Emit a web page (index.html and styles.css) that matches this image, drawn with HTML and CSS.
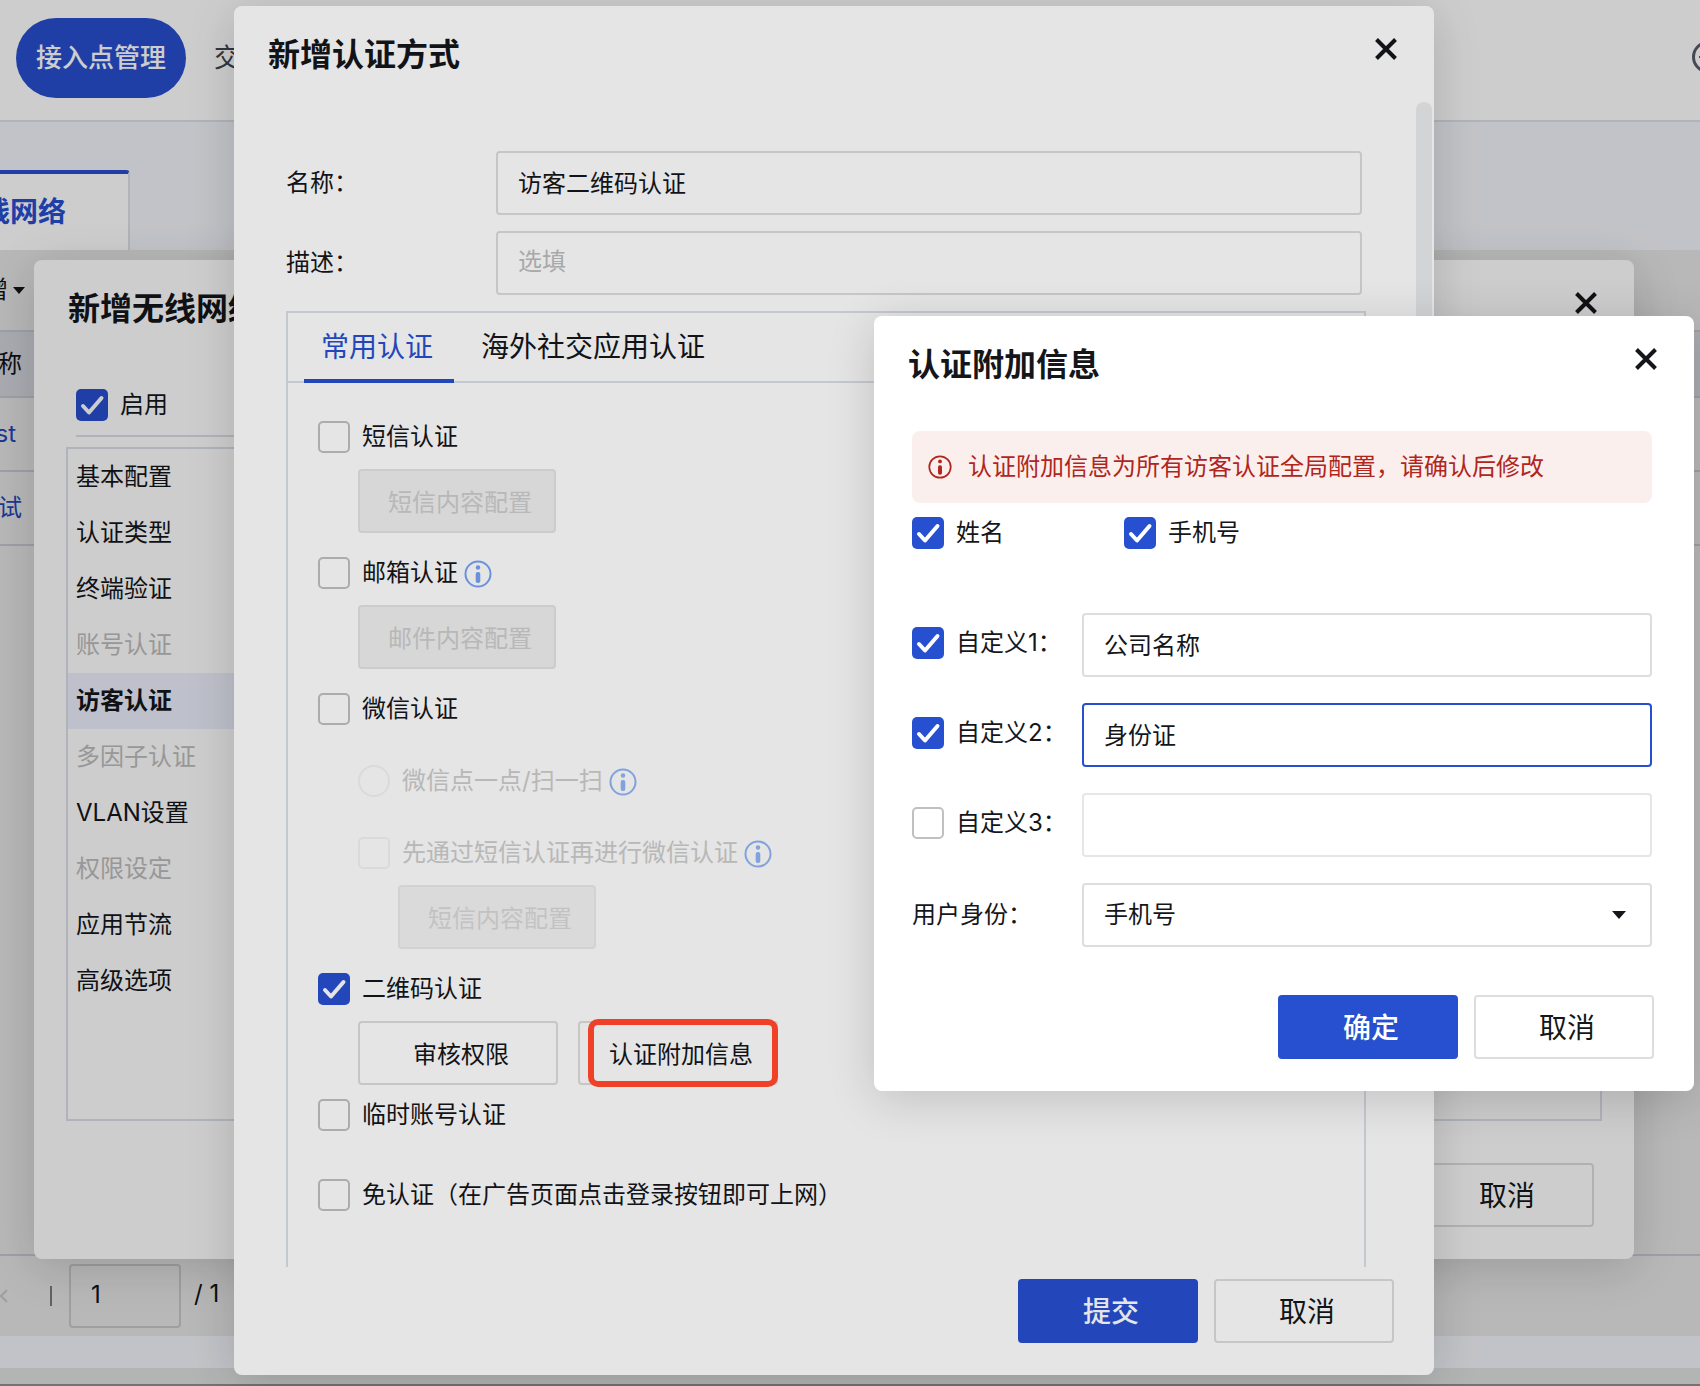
FILE: index.html
```html
<!DOCTYPE html>
<html lang="zh-CN">
<head>
<meta charset="utf-8">
<title>接入点管理 - 无线网络</title>
<link rel="stylesheet" href="styles.css">
</head>
<body>
<svg class="symbols" aria-hidden="true">
  <symbol id="close" viewBox="0 0 32 32"><path d="M6.500 6.500 25.500 25.500M25.500 6.500 6.500 25.500" fill="none" stroke="currentColor" stroke-width="4"/></symbol>
  <symbol id="info" viewBox="0 0 28 28"><circle cx="14" cy="14" r="12.500" fill="none" stroke="currentColor" stroke-width="2"/><circle cx="14" cy="7.500" r="2.200" fill="currentColor"/><rect x="11.700" y="12" width="4.600" height="11" rx="2" fill="currentColor"/></symbol>
  <symbol id="caret" viewBox="0 0 14 8"><path d="M0 0h14L7 8z" fill="currentColor"/></symbol>
</svg>

<div class="page">
  <header class="topbar">
    <a class="nav-item nav-active" href="#ap">接入点管理</a>
    <a class="nav-item" href="#switch">交换机管理</a>
    <button class="topbar-add" type="button" aria-label="添加">
      <svg viewBox="0 0 32 32" width="32" height="32"><circle cx="16" cy="16" r="14.500" fill="none" stroke="currentColor" stroke-width="3"/><path d="M7 16h18M16 7v18" stroke="currentColor" stroke-width="2"/></svg>
    </button>
  </header>
  <div class="tabstrip"><a class="page-tab" href="#wlan">无线网络</a></div>

  <main class="content">
    <div class="toolbar"><button class="add-menu" type="button">新增<svg width="12" height="7"><use href="#caret"/></svg></button></div>
    <table class="list">
      <thead><tr><th>名称</th></tr></thead>
      <tbody>
        <tr><td><a href="#test">test</a></td></tr>
        <tr><td><a href="#ceshi">测试</a></td></tr>
      </tbody>
    </table>
    <div class="pager">
      <button class="pager-prev" type="button" disabled aria-label="上一页"><svg width="8" height="14" viewBox="0 0 8 14"><path d="M7 1 1 7l6 6" fill="none" stroke="currentColor" stroke-width="2"/></svg></button>
      <span class="pager-sep"></span>
      <input class="field pager-input" type="text" value="1" aria-label="页码">
      <span class="pager-total">/ 1</span>
    </div>
    <div class="mask"></div>

    <section class="modal modal-wlan" role="dialog" aria-label="新增无线网络">
      <div class="modal-head">
        <h2>新增无线网络</h2>
        <button class="close" type="button" aria-label="关闭"><svg width="32" height="32"><use href="#close"/></svg></button>
      </div>
      <div class="wlan-body">
        <div class="wlan-enable"><label class="check"><input type="checkbox" checked>启用</label></div>
        <div class="wlan-panel">
          <nav class="side">
            <a href="#base">基本配置</a>
            <a href="#type">认证类型</a>
            <a href="#terminal">终端验证</a>
            <a class="off" href="#account">账号认证</a>
            <a class="current" href="#guest">访客认证</a>
            <a class="off" href="#mfa">多因子认证</a>
            <a href="#vlan">VLAN设置</a>
            <a class="off" href="#rights">权限设定</a>
            <a href="#throttle">应用节流</a>
            <a href="#advanced">高级选项</a>
          </nav>
        </div>
      </div>
      <div class="modal-foot wlan-foot"><button class="btn btn-large" type="button">取消</button></div>
    </section>
  </main>
  <div class="stage-gap"></div>
  <div class="window-edge"></div>

  <div class="mask"></div>

  <section class="modal modal-auth" role="dialog" aria-label="新增认证方式">
    <div class="modal-head">
      <h2>新增认证方式</h2>
      <button class="close" type="button" aria-label="关闭"><svg width="32" height="32"><use href="#close"/></svg></button>
    </div>
    <div class="auth-body">
      <span class="scroll-thumb"></span>
      <div class="form-row"><label for="auth-name">名称：</label><input class="field" id="auth-name" type="text" value="访客二维码认证"></div>
      <div class="form-row"><label for="auth-desc">描述：</label><input class="field" id="auth-desc" type="text" placeholder="选填"></div>
      <div class="auth-panel">
        <div class="tabs" role="tablist">
          <button class="tab tab-on" type="button" role="tab">常用认证</button>
          <button class="tab" type="button" role="tab">海外社交应用认证</button>
        </div>
        <div class="options">
          <div class="option">
            <label class="check"><input type="checkbox">短信认证</label>
            <div class="option-actions"><button class="btn" type="button" disabled>短信内容配置</button></div>
          </div>
          <div class="option">
            <div class="line"><label class="check"><input type="checkbox">邮箱认证</label><svg class="info" width="28" height="28"><use href="#info"/></svg></div>
            <div class="option-actions"><button class="btn" type="button" disabled>邮件内容配置</button></div>
          </div>
          <div class="option option-wechat">
            <label class="check"><input type="checkbox">微信认证</label>
            <div class="line sub"><label class="check"><input type="radio" disabled>微信点一点/扫一扫</label><svg class="info info-off" width="28" height="28"><use href="#info"/></svg></div>
            <div class="option sub">
              <div class="line"><label class="check"><input type="checkbox" disabled>先通过短信认证再进行微信认证</label><svg class="info info-off" width="28" height="28"><use href="#info"/></svg></div>
              <div class="option-actions"><button class="btn btn-faint" type="button" disabled>短信内容配置</button></div>
            </div>
          </div>
          <div class="option option-qr">
            <label class="check"><input type="checkbox" checked>二维码认证</label>
            <div class="option-actions">
              <button class="btn btn-wide" type="button">审核权限</button>
              <span class="marked"><button class="btn btn-wide" type="button">认证附加信息</button></span>
            </div>
          </div>
          <div class="option option-last">
            <label class="check"><input type="checkbox">临时账号认证</label>
            <label class="check"><input type="checkbox">免认证（在广告页面点击登录按钮即可上网）</label>
          </div>
        </div>
      </div>
    </div>
    <div class="modal-foot auth-foot">
      <button class="btn btn-large btn-primary" type="button">提交</button>
      <button class="btn btn-large" type="button">取消</button>
    </div>
  </section>

  <div class="mask"></div>

  <section class="modal modal-extra" role="dialog" aria-label="认证附加信息">
    <div class="modal-head">
      <h2>认证附加信息</h2>
      <button class="close" type="button" aria-label="关闭"><svg width="32" height="32"><use href="#close"/></svg></button>
    </div>
    <div class="extra-body">
      <p class="alert"><svg width="24" height="24"><use href="#info"/></svg>认证附加信息为所有访客认证全局配置，请确认后修改</p>
      <div class="pair">
        <label class="check"><input type="checkbox" checked>姓名</label>
        <label class="check"><input type="checkbox" checked>手机号</label>
      </div>
      <div class="extra-rows">
        <div class="extra-row"><label class="check"><input type="checkbox" checked>自定义1：</label><input class="field" type="text" value="公司名称" aria-label="自定义1"></div>
        <div class="extra-row"><label class="check"><input type="checkbox" checked>自定义2：</label><input class="field field-active" type="text" value="身份证" aria-label="自定义2"></div>
        <div class="extra-row"><label class="check"><input type="checkbox">自定义3：</label><input class="field" type="text" disabled aria-label="自定义3"></div>
        <div class="extra-row"><label for="identity">用户身份：</label><span class="select"><select class="field" id="identity"><option>手机号</option></select><svg width="14" height="8"><use href="#caret"/></svg></span></div>
      </div>
    </div>
    <div class="modal-foot">
      <button class="btn btn-large btn-primary" type="button">确定</button>
      <button class="btn btn-large" type="button">取消</button>
    </div>
  </section>
</div>
</body>
</html>
```
FILE: styles.css
```css
:root {
  --blue: #2750d0;
  --text: #14161a;
  --line: #dbdfe8;
  --field: #dddddd;
}

* { box-sizing: border-box; }

body {
  margin: 0;
  overflow: hidden;
  font: 24px/32px Inter, "Noto Sans CJK SC", sans-serif;
  color: var(--text);
  background: #fff;
}

button, input, select { font: inherit; color: inherit; }
button { border: 0; padding: 0; background: none; }
a { color: inherit; text-decoration: none; }
svg { display: block; flex: none; }
.symbols { position: absolute; width: 0; height: 0; }

.page {
  position: relative;
  display: flex;
  flex-direction: column;
  height: 100vh;
  overflow: hidden;
}

/* Page behind the dialogs */
.topbar {
  display: flex;
  align-items: center;
  flex: none;
  gap: 8px;
  height: 122px;
  padding: 0 0 4px 16px;
  border-bottom: 2px solid var(--line);
}
.nav-item {
  padding: 24px 20px;
  font-size: 26px;
  color: #3f434d;
}
.nav-active {
  border-radius: 40px;
  font-weight: 500;
  color: #fff;
  background: var(--blue);
}
.topbar-add { margin: 0 -24px 0 auto; padding-bottom: 2px; color: #565c6b; }

.tabstrip {
  display: flex;
  align-items: flex-end;
  flex: none;
  height: 128px;
  background: #f2f3f9;
}
.page-tab {
  height: 80px;
  margin-left: -110px;
  padding: 22px 62px 0 64px;
  border-top: 4px solid var(--blue);
  border-right: 2px solid var(--line);
  border-radius: 0 4px 0 0;
  font-size: 28px;
  font-weight: 700;
  color: var(--blue);
  background: #fff;
}

.content {
  position: relative;
  display: flex;
  flex-direction: column;
  flex: 1;
  background: #fff;
}
.toolbar { display: flex; align-items: center; height: 80px; margin-left: -40px; }
.add-menu { display: flex; align-items: center; gap: 5px; }
.list { width: 100%; border-collapse: separate; border-spacing: 0; border-top: 2px solid var(--line); }
.list th, .list td {
  padding: 0;
  border-bottom: 2px solid var(--line);
  text-align: left;
  font-weight: 400;
  text-indent: -26px;
}
.list th { height: 66px; background: #eceff7; }
.list td { height: 74px; color: var(--blue); }
.pager {
  display: flex;
  align-items: center;
  gap: 13px;
  height: 82px;
  margin-top: auto;
  border-top: 2px solid var(--line);
}
.pager-prev { color: #dcdcdc; }
.pager-sep { width: 2px; height: 20px; margin: 0 4px 0 29px; background: #8a8a8a; }
.pager-input { width: 112px; padding-left: 24px; }
.pager-total { padding-bottom: 4px; }
.stage-gap { flex: none; height: 32px; background: #f2f3f9; }
.window-edge { flex: none; height: 18px; border-bottom: 2px solid #909090; background: #dfe0e0; }

.mask { position: absolute; inset: 0; background: rgba(0, 0, 0, .1); }

/* Dialog frame */
.modal {
  position: absolute;
  display: flex;
  flex-direction: column;
  border-radius: 8px;
  background: #fff;
  box-shadow: 0 8px 48px rgba(0, 0, 0, .16);
}
.modal-head {
  display: flex;
  justify-content: space-between;
  flex: none;
  height: 96px;
  padding: 27px 32px 0 34px;
}
.modal-head h2 { margin: 2px 0 0; font-size: 32px; line-height: 40px; font-weight: 700; }
.close { align-self: flex-start; }
.modal-foot { display: flex; justify-content: flex-end; flex: none; gap: 16px; padding: 48px 40px 32px; }

/* Controls */
.field {
  height: 64px;
  min-width: 0;
  padding: 0 20px 3px;
  border: 2px solid var(--field);
  border-radius: 4px;
  outline: 0;
  background: #fff;
}
.field::placeholder { color: #bbbbbb; opacity: 1; }
.field:disabled { border-color: #e6e6e6; }
.field-active { border-color: var(--blue); }

.btn {
  height: 64px;
  padding: 3px 24px 0 28px;
  border: 2px solid var(--field);
  border-radius: 4px;
  background: #fff;
}
.btn:disabled { padding-right: 22px; border-color: #e4e4e4; color: #cdcdcd; background: #f0f0f0; }
.btn-faint { opacity: .75; }
.btn-wide { width: 200px; padding: 3px 0 0 6px; }
.btn-large { width: 180px; padding: 2px 0 0 6px; font-size: 28px; }
.btn-primary { border-color: var(--blue); font-weight: 500; color: #fff; background: var(--blue); }

.check { display: flex; align-items: center; gap: 12px; }
.check input {
  appearance: none;
  flex: none;
  width: 32px;
  height: 32px;
  margin: 0;
  border: 2px solid #c0c0c0;
  border-radius: 5px;
}
.check input[type="radio"] { border-radius: 50%; }
.check input:checked {
  border: 0;
  background: var(--blue) url("data:image/svg+xml,%3Csvg xmlns='http://www.w3.org/2000/svg' viewBox='0 0 32 32'%3E%3Cpath d='M7 17l6 6.500L25.500 9' fill='none' stroke='white' stroke-width='4' stroke-linecap='round' stroke-linejoin='round'/%3E%3C/svg%3E");
}
.check:has(:disabled) { color: #cdcdcd; }
.check input:disabled { border-color: #f3f3f3; }

/* Wireless network dialog */
.modal-wlan { top: 10px; left: 34px; right: 66px; }
.wlan-body { display: flex; flex-direction: column; gap: 10px; padding: 33px 32px 0; }
.wlan-enable { margin: 0 10px; padding-bottom: 14px; border-bottom: 2px solid var(--line); }
.wlan-panel { min-height: 674px; border: 2px solid var(--line); }
.side { display: flex; flex-direction: column; width: 220px; }
.side a { padding: 12px 8px; }
.side .off { color: #bdbdbd; }
.side .current { font-weight: 700; background: #ecf0fc; }
.wlan-foot { padding-top: 42px; }

/* Authentication dialog */
.modal-auth { top: 6px; bottom: 11px; left: 234px; width: 1200px; }
.auth-body {
  position: relative;
  display: flex;
  flex-direction: column;
  flex: 1;
  gap: 16px;
  min-height: 0;
  padding: 49px 68px 0 52px;
  overflow: hidden;
}
.scroll-thumb {
  position: absolute;
  top: 0;
  right: 2px;
  width: 16px;
  height: 60%;
  border-radius: 8px;
  background: #ebedef;
}
.form-row { display: flex; align-items: center; flex: none; margin-right: 4px; }
.form-row label { width: 210px; }
.form-row .field { flex: 1; }
.auth-panel { flex: none; border: 2px solid var(--line); padding-bottom: 120px; }
.tabs { display: flex; gap: 10px; height: 70px; padding-left: 16px; border-bottom: 2px solid var(--line); }
.tab {
  height: 70px;
  padding: 2px 21px 0 17px;
  border-bottom: 4px solid transparent;
  font-size: 28px;
}
.tab-on { border-color: var(--blue); color: var(--blue); }
.options { display: flex; flex-direction: column; gap: 24px; padding: 38px 30px 0; }
.option { display: flex; flex-direction: column; gap: 16px; }
.option-actions { display: flex; gap: 20px; padding-left: 40px; }
.option-wechat { gap: 40px; }
.option-last { gap: 48px; margin-top: -10px; }
.sub { margin-left: 40px; }
.line { display: flex; align-items: center; gap: 6px; height: 32px; }
.info { margin-top: 2px; color: #76a3f5; }
.info-off { opacity: .8; }
.marked { position: relative; }
.marked::after {
  content: "";
  position: absolute;
  z-index: 1;
  inset: -2px 0 -2px 10px;
  border: 6px solid #ee4127;
  border-radius: 10px;
}
.auth-foot { padding-top: 12px; }

/* Extra information dialog */
.modal-extra { z-index: 2; top: 316px; right: 6px; width: 820px; }
.extra-body { padding: 19px 42px 0 38px; }
.alert {
  display: flex;
  align-items: center;
  gap: 16px;
  height: 72px;
  margin: 0 0 14px;
  padding: 0 16px;
  border-radius: 8px;
  color: #b0261c;
  background: #fbefed;
}
.pair { display: flex; gap: 120px; }
.extra-rows { display: flex; flex-direction: column; gap: 26px; margin-top: 64px; }
.extra-row { display: grid; grid-template-columns: 170px 1fr; align-items: center; }
.extra-row .check { padding-bottom: 4px; }
.select { position: relative; display: grid; }
.select select { appearance: none; padding-bottom: 0; }
.select svg { position: absolute; top: 28px; right: 26px; pointer-events: none; }
```
